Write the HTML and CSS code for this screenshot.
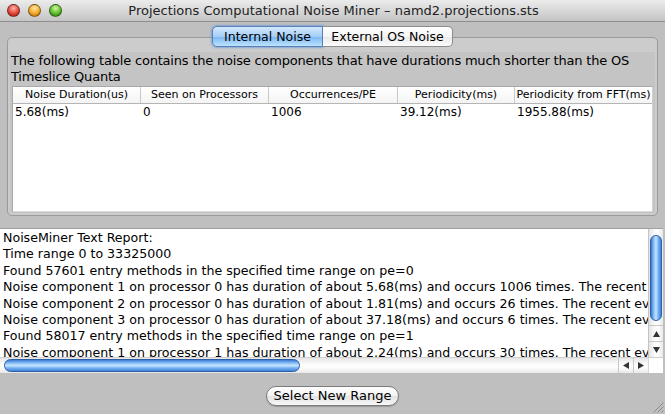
FILE: index.html
```html
<!DOCTYPE html>
<html>
<head>
<meta charset="utf-8">
<link rel="stylesheet" href="styles.css">
</head>
<body>
<div class="window">
  <div class="titlebar">
    <div class="lights">
      <span class="light red"></span>
      <span class="light yellow"></span>
      <span class="light green"></span>
    </div>
    <div class="title">Projections Computational Noise Miner – namd2.projections.sts</div>
  </div>

  <div class="tabs">
    <div class="seg selected">Internal Noise</div>
    <div class="seg other">External OS Noise</div>
  </div>

  <div class="pane">
    <div class="pane-content">
      <div class="desc">The following table contains the noise components that have durations much shorter than the OS Timeslice Quanta</div>
      <div class="table">
        <div class="thead">
          <div class="th">Noise Duration(us)</div>
          <div class="th">Seen on Processors</div>
          <div class="th">Occurrences/PE</div>
          <div class="th">Periodicity(ms)</div>
          <div class="th last">Periodicity from FFT(ms)</div>
        </div>
        <div class="tr">
          <div class="td">5.68(ms)</div>
          <div class="td">0</div>
          <div class="td">1006</div>
          <div class="td">39.12(ms)</div>
          <div class="td">1955.88(ms)</div>
        </div>
      </div>
    </div>
  </div>

  <div class="report">
    <div class="report-main">
      <div class="report-text">
        <div class="line">NoiseMiner Text Report:</div>
        <div class="line">Time range 0 to 33325000</div>
        <div class="line">Found 57601 entry methods in the specified time range on pe=0</div>
        <div class="line">Noise component 1 on processor 0 has duration of about 5.68(ms) and occurs 1006 times. The recent events</div>
        <div class="line">Noise component 2 on processor 0 has duration of about 1.81(ms) and occurs 26 times. The recent events</div>
        <div class="line">Noise component 3 on processor 0 has duration of about 37.18(ms) and occurs 6 times. The recent events</div>
        <div class="line">Found 58017 entry methods in the specified time range on pe=1</div>
        <div class="line">Noise component 1 on processor 1 has duration of about 2.24(ms) and occurs 30 times. The recent events</div>
      </div>
      <div class="vscroll">
        <div class="vtrack"><div class="vthumb"></div></div>
        <div class="arrow"><svg width="7" height="6" viewBox="0 0 7 6"><polygon points="3.5,0 7,6 0,6" fill="#333"/></svg></div>
        <div class="arrow"><svg width="7" height="6" viewBox="0 0 7 6"><polygon points="0,0 7,0 3.5,6" fill="#333"/></svg></div>
      </div>
    </div>
    <div class="hscroll">
      <div class="htrack"><div class="hthumb"></div></div>
      <div class="harrow"><svg width="6" height="7" viewBox="0 0 6 7"><polygon points="0,3.5 6,0 6,7" fill="#333"/></svg></div>
      <div class="harrow"><svg width="6" height="7" viewBox="0 0 6 7"><polygon points="0,0 6,3.5 0,7" fill="#333"/></svg></div>
      <div class="corner"></div>
    </div>
  </div>

  <div class="footer">
    <div class="button">Select New Range</div>
    <svg class="grip" width="12" height="12" viewBox="0 0 12 12">
      <line x1="11.5" y1="1.5" x2="1.5" y2="11.5" stroke="#8a8a8a" stroke-width="1"/>
      <line x1="11.5" y1="5.5" x2="5.5" y2="11.5" stroke="#8a8a8a" stroke-width="1"/>
      <line x1="11.5" y1="9.5" x2="9.5" y2="11.5" stroke="#8a8a8a" stroke-width="1"/>
    </svg>
  </div>
</div>
</body>
</html>
```

FILE: styles.css
```css
* { box-sizing: border-box; }
html, body { margin: 0; padding: 0; }
body {
  width: 665px;
  height: 414px;
  overflow: hidden;
  background: #bfbfbf;
  font-family: "DejaVu Sans", "Liberation Sans", sans-serif;
  font-size: 12px;
  color: #000;
}
.window {
  width: 665px;
  height: 414px;
  display: flex;
  flex-direction: column;
}
.titlebar {
  height: 22px;
  flex: none;
  display: flex;
  align-items: center;
  background: linear-gradient(#ececec, #d6d6d6 55%, #c4c4c4);
  border-bottom: 1px solid #8f8f8f;
  padding-left: 7px;
}
.lights { display: flex; gap: 8px; }
.light {
  width: 13px; height: 13px; border-radius: 50%;
  border: 1px solid rgba(0,0,0,0.45);
}
.red { background: radial-gradient(circle at 50% 30%, #ffb2a8, #e2473a 55%, #9b1208); }
.yellow { background: radial-gradient(circle at 50% 30%, #ffe9a0, #f2a82a 55%, #a45a00); }
.green { background: radial-gradient(circle at 50% 30%, #d4f7a2, #5cbd2a 55%, #1f6e07); }
.title {
  flex: 1;
  text-align: center;
  font-size: 13px;
  color: #222;
  padding-right: 60px;
  white-space: nowrap;
}

.tabs {
  flex: none;
  display: flex;
  justify-content: center;
  margin-top: 4px;
  height: 21px;
  position: relative;
  z-index: 2;
}
.seg {
  font-size: 12.5px;
  height: 21px;
  line-height: 19px;
  white-space: nowrap;
  text-align: center;
  border: 1px solid #8d8d8d;
  background: linear-gradient(#ffffff, #f5f5f5 50%, #e9e9e9 51%, #fbfbfb);
}
.seg.selected {
  width: 111px;
  border-radius: 5px 0 0 5px;
  border-color: #5a7fb7;
  background: linear-gradient(#d3e8fc, #a4cef7 50%, #78b6f3 51%, #bde3fd);
  box-shadow: 0 0 2px 1px rgba(80,140,220,0.55);
}
.seg.other {
  width: 130px;
  border-left: none;
  border-radius: 0 5px 5px 0;
}

.pane {
  flex: none;
  margin: -10px 7px 0 7px;
  height: 179px;
  border: 1px solid #9a9a9a;
  border-radius: 5px;
  background: #cccccc;
  padding: 14px 2px 2px 2px;
}
.pane-content {
  background: #c4c4c4;
  height: 100%;
  display: flex;
  flex-direction: column;
}
.desc {
  font-size: 13px;
  line-height: 16px;
  padding: 1px 0 1px 1px;
  height: 34px;
  letter-spacing: -0.2px;
}
.table {
  flex: 1;
  margin: 0 2px 1px 2px;
  background: #fff;
  border: 1px solid #a9a9a9;
  border-right-color: #d0d0d0;
  border-bottom-color: #dadada;
}
.thead, .tr {
  display: grid;
  grid-template-columns: 128px 128px 129px 117px 1fr;
  height: 17px;
}
.thead {
  border-bottom: 1px solid #b5b5b5;
  background: linear-gradient(#ffffff, #f4f4f4);
}
.th {
  font-size: 11px;
  line-height: 16px;
  text-align: center;
  border-right: 1px solid #c8c8c8;
  white-space: nowrap;
  overflow: hidden;
}
.th.last { border-right: none; }
.td {
  font-size: 12px;
  line-height: 17px;
  padding-left: 2px;
}

.report {
  flex: none;
  margin-top: 12px;
  margin-right: 2px;
  height: 145px;
  background: #fff;
  border-top: 1px solid #a0a0a0;
  display: flex;
  flex-direction: column;
}
.report-main {
  flex: 1;
  display: flex;
  min-height: 0;
}
.report-text {
  flex: 1;
  overflow: hidden;
  white-space: nowrap;
  padding: 1px 0 0 3px;
  font-size: 12.6px;
  line-height: 16.4px;
}
.vscroll {
  width: 15px;
  flex: none;
  display: flex;
  flex-direction: column;
  background: linear-gradient(90deg, #e4e4e4, #fafafa 40%, #ffffff 60%, #e9e9e9);
  border-left: 1px solid #c4c4c4;
}
.vtrack {
  flex: 1;
  padding: 6px 1px 0 1px;
}
.vthumb {
  height: 86px;
  border-radius: 7px;
  border: 1px solid #2d5fa6;
  background: linear-gradient(90deg, #3a78d4, #8ec3f7 30%, #c3e3ff 50%, #71aef0 75%, #3f82d9);
}
.arrow {
  height: 16px;
  display: flex;
  align-items: center;
  justify-content: center;
  border-top: 1px solid #c8c8c8;
}
.hscroll {
  flex: none;
  height: 16px;
  display: flex;
  border-top: 1px solid #cfcfcf;
  background: linear-gradient(#e6e6e6, #fbfbfb 40%, #ffffff 60%, #e8e8e8);
}
.htrack {
  flex: 1;
  padding: 1px 0 1px 4px;
}
.hthumb {
  width: 296px;
  height: 13px;
  border-radius: 7px;
  border: 1px solid #2d5fa6;
  background: linear-gradient(#3a78d4, #8ec3f7 30%, #c3e3ff 50%, #71aef0 75%, #3f82d9);
}
.harrow {
  width: 15px;
  display: flex;
  align-items: center;
  justify-content: center;
  border-left: 1px solid #c8c8c8;
}
.corner {
  width: 15px;
  background: #fff;
  border-left: 1px solid #d8d8d8;
}

.footer {
  flex: 1;
  display: flex;
  justify-content: center;
  align-items: flex-start;
  padding-top: 13px;
  position: relative;
}
.button {
  height: 20px;
  width: 133px;
  border: 1px solid #7c7c7c;
  border-radius: 10px;
  background: linear-gradient(#ffffff, #f2f2f2 50%, #e2e2e2 51%, #f8f8f8);
  font-size: 13px;
  line-height: 18px;
  text-align: center;
  box-shadow: 0 1px 1px rgba(0,0,0,0.2);
  white-space: nowrap;
}
.grip {
  position: absolute;
  right: 1px;
  bottom: 1px;
}
```
